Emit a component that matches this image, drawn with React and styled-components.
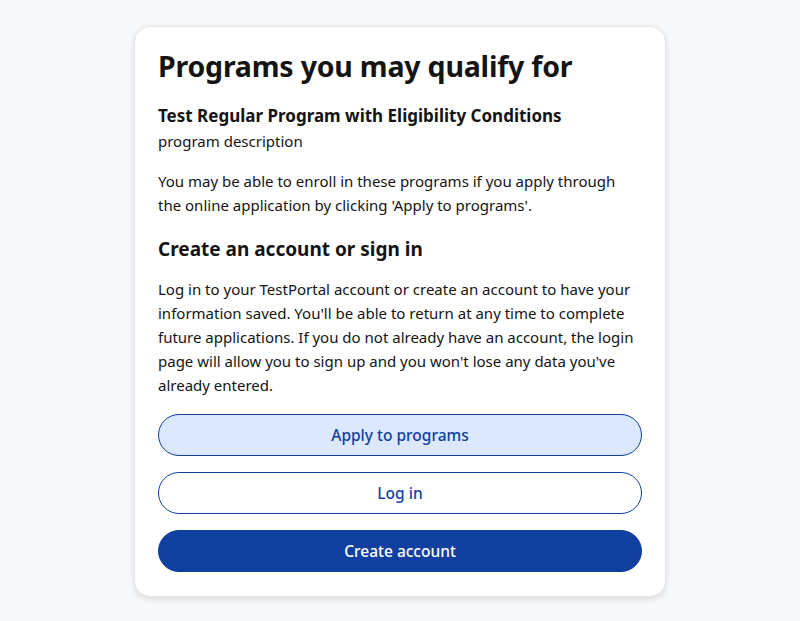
import React from 'react';
import styled, { createGlobalStyle } from 'styled-components';

const GlobalStyle = createGlobalStyle`
  body {
    margin: 0;
    background: #f7f8fa;
    font-family: "Noto Sans", "Open Sans", sans-serif;
    color: #141414;
  }
`;

const Page = styled.div`
  display: flex;
  justify-content: center;
  padding-top: 26px;
  min-height: 621px;
  box-sizing: border-box;
`;

const Card = styled.section`
  width: 532px;
  box-sizing: border-box;
  background: #fff;
  border: 1px solid #e4e6ea;
  border-radius: 16px;
  box-shadow: 0 2px 6px rgba(0, 0, 0, 0.12);
  padding: 19px 23px 24px;
  align-self: flex-start;
`;

const Title = styled.h1`
  font-size: 28.5px;
  font-weight: 700;
  line-height: 40px;
  margin: 0 0 18px;
  letter-spacing: -0.2px;
`;

const ProgramName = styled.h2`
  font-size: 17px;
  font-weight: 700;
  line-height: 24px;
  margin: 0;
`;

const Text = styled.p`
  font-size: 15px;
  line-height: 24px;
  margin: ${({ $gap }) => $gap || '0'};
`;

const Subheading = styled.h3`
  font-size: 19px;
  font-weight: 700;
  line-height: 28px;
  margin: 0 0 14px;
`;

const Actions = styled.div`
  display: flex;
  flex-direction: column;
  gap: 16px;
  margin-top: 17px;
`;

const Button = styled.button`
  height: 42px;
  border-radius: 21px;
  font-family: inherit;
  font-size: 15.5px;
  font-weight: 500;
  cursor: pointer;
  border: 1px solid #113f9f;
  color: ${({ $variant }) => ($variant === 'primary' ? '#fff' : '#113f9f')};
  background: ${({ $variant }) =>
    $variant === 'primary' ? '#113f9f' : $variant === 'tonal' ? '#dbe8fd' : '#fff'};
`;

export default function App() {
  return (
    <>
      <GlobalStyle />
      <Page>
        <Card>
          <Title>Programs you may qualify for</Title>
          <ProgramName>Test Regular Program with Eligibility Conditions</ProgramName>
          <Text $gap="1px 0 16px">program description</Text>
          <Text $gap="0 0 18px">
            You may be able to enroll in these programs if you apply through the online
            application by clicking 'Apply to programs'.
          </Text>
          <Subheading>Create an account or sign in</Subheading>
          <Text>
            Log in to your TestPortal account or create an account to have your information
            saved. You'll be able to return at any time to complete future applications. If
            you do not already have an account, the login page will allow you to sign up and
            you won't lose any data you've already entered.
          </Text>
          <Actions>
            <Button $variant="tonal">Apply to programs</Button>
            <Button>Log in</Button>
            <Button $variant="primary">Create account</Button>
          </Actions>
        </Card>
      </Page>
    </>
  );
}
